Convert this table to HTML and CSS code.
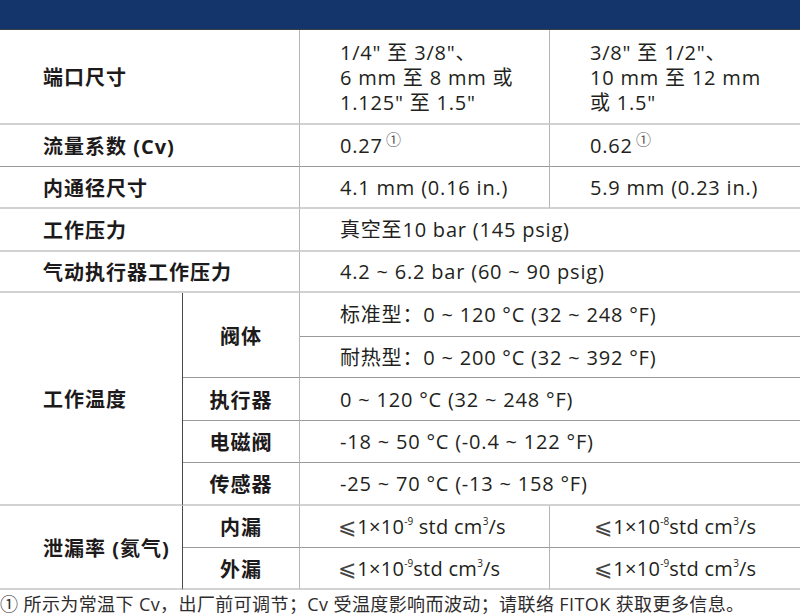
FILE: index.html
```html
<!DOCTYPE html>
<html lang="zh-CN">
<head>
<meta charset="utf-8">
<title>规格</title>
<link rel="stylesheet" href="styles.css">
</head>
<body>
<div class="spec">
  <div class="hd"></div>

  <div class="lbl cs2 main"><span>端口尺寸</span></div>
  <div class="val main vr top"><span>1/4" 至 3/8"、<br>6 mm 至 8 mm 或<br>1.125" 至 1.5"</span></div>
  <div class="val main top"><span>3/8" 至 1/2"、<br>10 mm 至 12 mm<br>或 1.5"</span></div>

  <div class="lbl cs2 sub"><span>流量系数 (Cv)</span></div>
  <div class="val sub vr"><span>0.27<sup class="fn">①</sup></span></div>
  <div class="val sub"><span>0.62<sup class="fn">①</sup></span></div>

  <div class="lbl cs2 main"><span>内通径尺寸</span></div>
  <div class="val main vr"><span>4.1 mm (0.16 in.)</span></div>
  <div class="val main"><span>5.9 mm (0.23 in.)</span></div>

  <div class="lbl cs2 main"><span>工作压力</span></div>
  <div class="val cs2 main"><span>真空至10 bar (145 psig)</span></div>

  <div class="lbl cs2 main"><span>气动执行器工作压力</span></div>
  <div class="val cs2 main"><span>4.2 ~ 6.2 bar (60 ~ 90 psig)</span></div>

  <div class="lbl rs5 main dk"><span>工作温度</span></div>
  <div class="sl rs2 sub"><span>阀体</span></div>
  <div class="val cs2 sub"><span>标准型：0 ~ 120 °C (32 ~ 248 °F)</span></div>
  <div class="val cs2 sub"><span>耐热型：0 ~ 200 °C (32 ~ 392 °F)</span></div>
  <div class="sl sub"><span>执行器</span></div>
  <div class="val cs2 sub"><span>0 ~ 120 °C (32 ~ 248 °F)</span></div>
  <div class="sl sub"><span>电磁阀</span></div>
  <div class="val cs2 sub"><span>-18 ~ 50 °C (-0.4 ~ 122 °F)</span></div>
  <div class="sl main"><span>传感器</span></div>
  <div class="val cs2 main"><span>-25 ~ 70 °C (-13 ~ 158 °F)</span></div>

  <div class="lbl rs2 main dk"><span>泄漏率 (氦气)</span></div>
  <div class="sl sub"><span>内漏</span></div>
  <div class="val leak sub vr"><span><span class="le">⩽</span>1×10<sup class="ex">-9</sup> std cm<sup class="ex">3</sup>/s</span></div>
  <div class="val leak c4 sub"><span><span class="le">⩽</span>1×10<sup class="ex">-8</sup>std cm<sup class="ex">3</sup>/s</span></div>
  <div class="sl main"><span>外漏</span></div>
  <div class="val leak main vr"><span><span class="le">⩽</span>1×10<sup class="ex">-9</sup>std cm<sup class="ex">3</sup>/s</span></div>
  <div class="val leak c4 main"><span><span class="le">⩽</span>1×10<sup class="ex">-9</sup>std cm<sup class="ex">3</sup>/s</span></div>
</div>
<p class="note">① 所示为常温下 Cv，出厂前可调节；Cv 受温度影响而波动；请联络 FITOK 获取更多信息。</p>
</body>
</html>
```

FILE: styles.css
```css
html, body {
  margin: 0;
  padding: 0;
  background: #ffffff;
}

body {
  width: 800px;
  height: 616px;
  overflow: hidden;
  color: #231f20;
  font-family: "Open Sans", "Noto Sans CJK SC", sans-serif;
}

.spec {
  display: grid;
  grid-template-columns: 183px 117px 250px 250px;
  grid-template-rows: 30px 95px 42px 42px 43px 41px 44px 41px 43px 42px 43px 42px 42px;
}

.spec > div {
  box-sizing: border-box;
  display: flex;
  align-items: center;
}

.hd {
  grid-column: 1 / -1;
  background: #14356b;
  border-bottom: 1px solid #3a3f48;
}

.cs2 { grid-column: span 2; }
.rs2 { grid-row: span 2; }
.rs5 { grid-row: span 5; }

.main { border-bottom: 2px solid #d2d2d2; }
.sub { border-bottom: 1px solid #9a9a9a; }

.lbl {
  padding-left: 43px;
  font-size: 20px;
  font-weight: 700;
  letter-spacing: 1px;
  color: #1d1a1b;
  border-right: 1px solid #b5b5b5;
}

.lbl.dk {
  border-right: 1px solid #4a4a4a;
}

.sl {
  justify-content: center;
  font-size: 20px;
  font-weight: 700;
  letter-spacing: 1px;
  color: #1d1a1b;
  border-right: 1px solid #b5b5b5;
}

.val {
  padding-left: 40px;
  font-size: 20px;
  letter-spacing: 0.8px;
  line-height: 25px;
}

.val.leak {
  letter-spacing: 0.3px;
  padding-left: 38px;
}

.val.leak.c4 {
  padding-left: 44px;
}

.val.vr {
  border-right: 1px solid #b5b5b5;
}

.val.top {
  padding-top: 2px;
}

.fn {
  font-size: 15px;
  vertical-align: 8px;
  line-height: 0;
  margin-left: 3px;
  letter-spacing: 0;
  font-family: "DejaVu Sans", sans-serif;
  font-weight: 300;
  color: #555;
}

.ex {
  font-size: 10px;
  vertical-align: 9px;
  line-height: 0;
  letter-spacing: 0;
}

.le {
  font-family: "DejaVu Sans", sans-serif;
  font-size: 22px;
  font-weight: 300;
  color: #444;
  margin-right: 1px;
}

.note {
  margin: 0;
  height: 26px;
  line-height: 28px;
  font-size: 18px;
  letter-spacing: 0.4px;
  color: #2e2b2c;
  white-space: nowrap;
}
```
